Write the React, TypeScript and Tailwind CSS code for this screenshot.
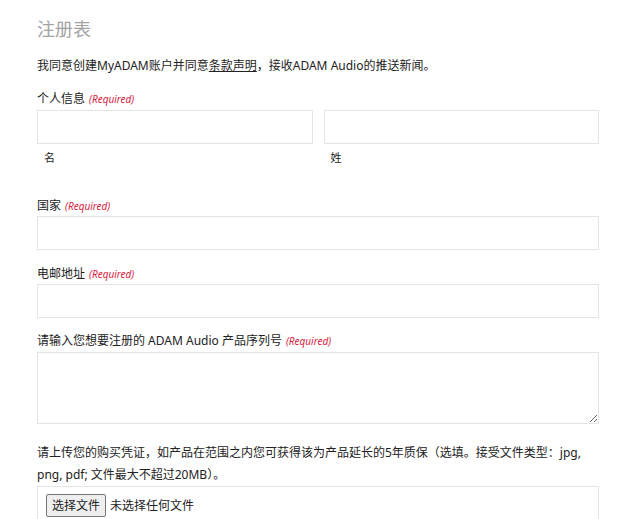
import React from 'react';

const font = { fontFamily: '"Noto Sans", "Noto Sans CJK SC", sans-serif' };

const Required: React.FC = () => (
  <span className="ml-1 text-[10px] italic text-[#d8223f]">(Required)</span>
);

const inputCls = 'block w-full h-[34px] border border-[#e5e5e5] bg-white outline-none';

const App: React.FC = () => {
  return (
    <div className="min-h-screen bg-white text-[#222]" style={font}>
      <div className="w-[562px] ml-[37px] pt-[17px]">
        <h2 className="text-[18px] leading-[24px] text-[#a3a3a3]">注册表</h2>

        <p className="mt-[15px] text-[12px] leading-[20px]">
          我同意创建MyADAM账户并同意<span className="underline">条款声明</span>，接收ADAM Audio的推送新闻。
        </p>

        <div className="mt-[13px]">
          <label className="block text-[12px] leading-[20px]">
            个人信息<Required />
          </label>
          <div className="mt-[1px] grid grid-cols-2 gap-[11px]">
            <div>
              <input className={inputCls} />
              <div className="mt-[5px] pl-[7px] text-[11px] leading-[18px]">名</div>
            </div>
            <div>
              <input className={inputCls} />
              <div className="mt-[5px] pl-[7px] text-[11px] leading-[18px]">姓</div>
            </div>
          </div>
        </div>

        <div className="mt-[29px]">
          <label className="block text-[12px] leading-[20px]">
            国家<Required />
          </label>
          <input className={inputCls} />
        </div>

        <div className="mt-[14px]">
          <label className="block text-[12px] leading-[20px]">
            电邮地址<Required />
          </label>
          <input className={inputCls} />
        </div>

        <div className="mt-[13px]">
          <label className="block text-[12px] leading-[20px]">
            请输入您想要注册的 ADAM Audio 产品序列号<Required />
          </label>
          <textarea className="mt-[1px] block w-full h-[72px] border border-[#e5e5e5] bg-white outline-none" />
        </div>

        <div className="mt-[18px]">
          <p className="text-[12px] leading-[22px]">
            请上传您的购买凭证，如产品在范围之内您可获得该为产品延长的5年质保（选填。接受文件类型：jpg, png, pdf; 文件最大不超过20MB）。
          </p>
          <div className="flex items-start h-[40px] pt-[7px] pl-[8px] border border-[#e5e5e5]">
            <span className="px-[5px] h-[23px] leading-[21px] text-[12px] border border-[#767676] rounded-[2px] bg-[#efefef]">
              选择文件
            </span>
            <span className="ml-[4px] text-[12px] leading-[23px]">未选择任何文件</span>
          </div>
        </div>
      </div>
    </div>
  );
};

export default App;
